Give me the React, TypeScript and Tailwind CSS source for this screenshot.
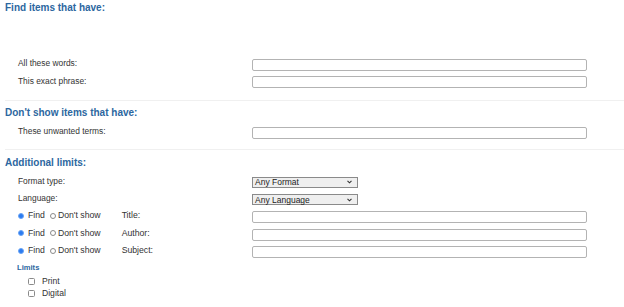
import React from "react";

const font = { fontFamily: '"Liberation Sans", Arial, sans-serif' };

function TextBox() {
    return <div className="w-[335px] h-[12px] border border-[#b3b3b3] rounded-[2px] bg-white shrink-0" />;
}

function Select({ label }: { label: string }) {
    return (
        <div className="w-[106px] h-[11px] border border-[#8a8a8a] bg-[#efefef] flex items-center justify-between pl-[2px] pr-[5px] shrink-0">
            <span className="text-[8.5px] leading-none text-[#222]">{label}</span>
            <svg width="5" height="4" viewBox="0 0 5 4">
                <path d="M0.5 0.8 L2.5 2.8 L4.5 0.8" fill="none" stroke="#333" strokeWidth="1.1" />
            </svg>
        </div>
    );
}

function Row({ label, children }: { label: React.ReactNode; children: React.ReactNode }) {
    return (
        <div className="flex items-center h-[17.5px]">
            <div className="w-[247px] pl-[13px] text-[8.4px] leading-none text-[#333] mb-[3px]">{label}</div>
            {children}
        </div>
    );
}

function Radio({ checked }: { checked?: boolean }) {
    return checked ? (
        <span className="inline-block w-[6px] h-[6px] rounded-full bg-[#2b7bf0] border border-[#6aa5f5]" />
    ) : (
        <span className="inline-block w-[6px] h-[6px] rounded-full bg-white border border-[#8a8a8a]" />
    );
}

function FindRow({ field }: { field: string }) {
    return (
        <div className="flex items-center h-[17.5px]">
            <div className="w-[247px] pl-[13px] flex items-center text-[8.7px] leading-none text-[#333] mb-[3px]">
                <Radio checked />
                <span className="ml-[4px]">Find</span>
                <span className="ml-[5px] flex"><Radio /></span>
                <span className="ml-[2px]">Don't show</span>
                <span className="ml-[21px]">{field}:</span>
            </div>
            <TextBox />
        </div>
    );
}

function Heading({ children }: { children: React.ReactNode }) {
    return <h2 className="h-[16px] leading-[16px] text-[10px] font-bold text-[#2c67a0]">{children}</h2>;
}

export default function App() {
    return (
        <div className="w-[624px] h-[307px] bg-white pl-[5px] overflow-hidden" style={font}>
            <Heading>Find items that have:</Heading>
            <div className="mt-[40px]">
                <Row label="All these words:"><TextBox /></Row>
                <Row label="This exact phrase:"><TextBox /></Row>
            </div>
            <div className="mt-[9px] border-t border-[#f0f0f0]" />
            <div className="mt-[4px]">
                <Heading>Don't show items that have:</Heading>
            </div>
            <div className="mt-[3px]">
                <Row label="These unwanted terms:"><TextBox /></Row>
            </div>
            <div className="mt-[7px] border-t border-[#f0f0f0]" />
            <div className="mt-[5px]">
                <Heading>Additional limits:</Heading>
            </div>
            <div className="mt-[3px]">
                <Row label="Format type:"><Select label="Any Format" /></Row>
                <Row label="Language:"><Select label="Any Language" /></Row>
                <FindRow field="Title" />
                <FindRow field="Author" />
                <FindRow field="Subject" />
            </div>
            <div className="mt-[2px] pl-[12px] h-[10px] leading-[10px] text-[7.6px] font-bold text-[#2c67a0]">Limits</div>
            <div className="mt-[2px] pl-[23px] text-[8.6px] text-[#333]">
                <label className="flex items-center h-[12px]">
                    <span className="inline-block w-[7px] h-[7px] border border-[#8a8a8a] rounded-[1.5px] bg-white" />
                    <span className="ml-[7px]">Print</span>
                </label>
                <label className="flex items-center h-[12px]">
                    <span className="inline-block w-[7px] h-[7px] border border-[#8a8a8a] rounded-[1.5px] bg-white" />
                    <span className="ml-[7px]">Digital</span>
                </label>
            </div>
        </div>
    );
}
